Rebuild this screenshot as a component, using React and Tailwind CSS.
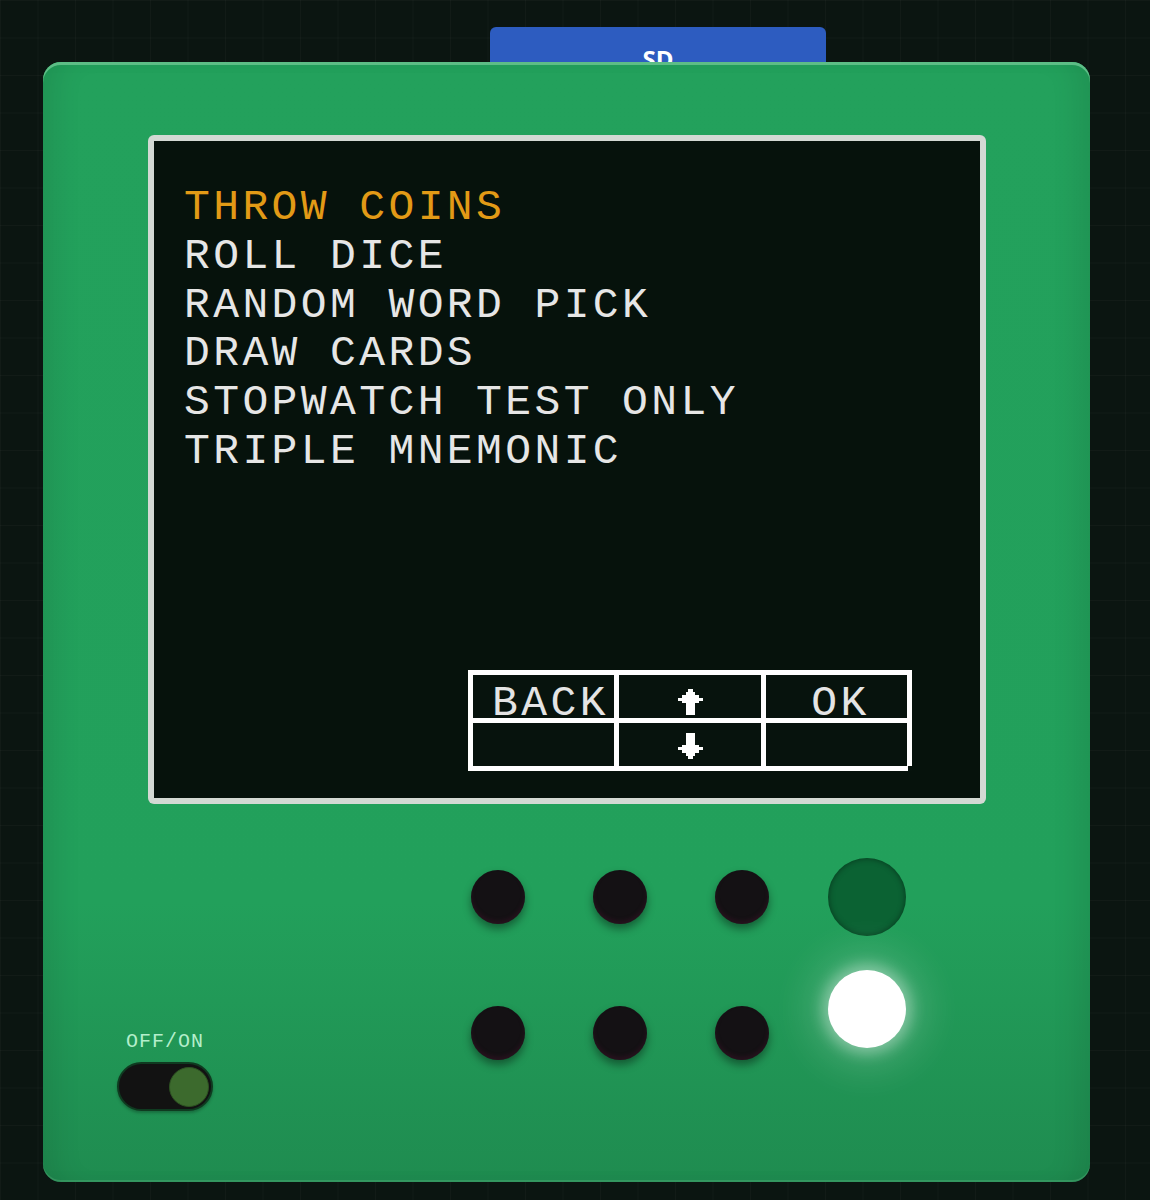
import React from "react";

const MENU = [
  "THROW COINS",
  "ROLL DICE",
  "RANDOM WORD PICK",
  "DRAW CARDS",
  "STOPWATCH TEST ONLY",
  "TRIPLE MNEMONIC",
];

const MONO = { fontFamily: '"Liberation Mono", "DejaVu Sans Mono", monospace' };

function ArrowUp() {
  return (
    <svg width="25" height="26" viewBox="0 0 25 26" shapeRendering="crispEdges">
      <rect x="10" y="0" width="5" height="3" fill="#fff" />
      <rect x="8" y="3" width="9" height="23" fill="#fff" />
      <rect x="4" y="6" width="17" height="8" fill="#fff" />
      <rect x="0" y="9" width="25" height="3" fill="#fff" />
    </svg>
  );
}

function ArrowDown() {
  return (
    <svg width="25" height="26" viewBox="0 0 25 26" shapeRendering="crispEdges">
      <rect x="8" y="0" width="9" height="23" fill="#fff" />
      <rect x="4" y="12" width="17" height="8" fill="#fff" />
      <rect x="0" y="14" width="25" height="3" fill="#fff" />
      <rect x="10" y="23" width="5" height="3" fill="#fff" />
    </svg>
  );
}

function KeyHint() {
  const cell = "bg-[#07130d] flex justify-center text-[43px] tracking-[3.4px] leading-[36px] pt-[11px] text-[#e4e4e4]";
  return (
    <div className="relative self-end mr-[68px] mb-[27px] grid grid-cols-[141px_142px_141px] grid-rows-[43px_43px] gap-[5px] p-[5px] bg-white">
      <div className={`${cell} pl-[14px]`} style={MONO}>BACK</div>
      <div className="bg-[#07130d] flex justify-center pt-[14px]"><ArrowUp /></div>
      <div className={`${cell} pl-[8px]`} style={MONO}>OK</div>
      <div className="bg-[#07130d]" />
      <div className="bg-[#07130d] flex justify-center pt-[10px]"><ArrowDown /></div>
      <div className="bg-[#07130d]" />
      <span className="absolute right-0 bottom-0 w-[4px] h-[5px] bg-[#07130d]" />
    </div>
  );
}

function Screen() {
  return (
    <div className="ml-[105px] w-[838px] h-[669px] rounded-[6px] bg-[#d3d9d4] p-[6px]">
      <div className="w-full h-full bg-[#06120c] flex flex-col justify-between">
        <ul className="pt-[43px] pl-[30px] text-[43px] tracking-[3.4px] leading-[48.8px] text-[#e6e6e6]" style={MONO}>
          {MENU.map((item, i) => (
            <li key={item} className={i === 0 ? "text-[#e29a16]" : ""}>
              {item}
            </li>
          ))}
        </ul>
        <KeyHint />
      </div>
    </div>
  );
}

function Dot() {
  return (
    <div className="w-[54px] h-[54px] rounded-full bg-[#141114] shadow-[0_5px_8px_rgba(0,0,0,0.4),inset_0_-3px_4px_rgba(70,20,45,0.4)]" />
  );
}

function Controls() {
  return (
    <div className="flex items-start">
      <div className="ml-[74px] mt-[226px] w-[96px] flex flex-col items-center gap-[8px]">
        <span className="text-[20px] leading-[24px] tracking-[1px] text-[#b4eecb]" style={MONO}>
          OFF/ON
        </span>
        <div className="w-[96px] h-[49px] rounded-full bg-[#121212] border-[2px] border-[#0f3a20] flex items-center justify-end pr-[2px] shadow-[0_2px_3px_rgba(0,0,0,0.25)]">
          <div className="w-[40px] h-[40px] rounded-full bg-[#3c6a2d] border border-[#2d5222]" />
        </div>
      </div>

      <div className="ml-[258px] mt-[54px] flex items-start">
        <div className="mt-[12px] grid grid-cols-[54px_54px_54px] gap-x-[68px] gap-y-[82px]">
          <Dot />
          <Dot />
          <Dot />
          <Dot />
          <Dot />
          <Dot />
        </div>
        <div className="ml-[59px] flex flex-col gap-[34px]">
          <div className="w-[78px] h-[78px] rounded-full bg-[#0b6233] shadow-[inset_0_0_6px_rgba(0,0,0,0.45)]" />
          <div className="w-[78px] h-[78px] rounded-full bg-white shadow-[0_0_14px_6px_rgba(255,255,255,0.35),0_0_40px_18px_rgba(255,255,255,0.18)]" />
        </div>
      </div>
    </div>
  );
}

export default function App() {
  return (
    <div className="relative w-[1150px] h-[1200px] overflow-hidden bg-[#0b1511] bg-[linear-gradient(rgba(255,255,255,0.028)_1px,transparent_1px),linear-gradient(90deg,rgba(255,255,255,0.028)_1px,transparent_1px)] bg-[length:37.5px_37.5px] pt-[62px] pl-[43px]">
      <div className="absolute left-[490px] top-[27px] w-[336px] h-[60px] rounded-t-[6px] bg-[#2d5cc0] flex justify-center pt-[20px]">
        <span className="text-[24px] leading-none font-bold text-white" style={{ fontFamily: '"Open Sans", "Noto Sans", sans-serif' }}>
          SD
        </span>
      </div>

      <div className="relative w-[1047px] h-[1120px] rounded-[18px] bg-[linear-gradient(180deg,#23a15c_0%,#22a05b_75%,#1f8c50_100%)] shadow-[inset_0_3px_0_#5dbd86,inset_0_-2px_0_rgba(120,200,150,0.25),inset_24px_0_28px_-12px_rgba(0,0,0,0.09),inset_-24px_0_28px_-12px_rgba(0,0,0,0.09)] pt-[73px]">
        <Screen />
        <Controls />
      </div>
    </div>
  );
}
